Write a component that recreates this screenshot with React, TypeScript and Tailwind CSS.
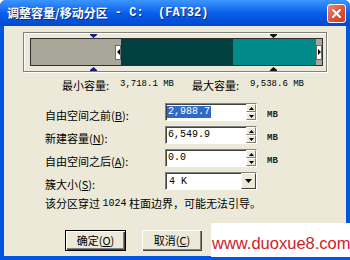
import React from 'react';

const cjk = "font-['Noto_Sans_CJK_SC',sans-serif]";
const mono = "font-['Liberation_Mono',monospace]";

const Marker = ({ up, color }: { up?: boolean; color: string }) => (
    <svg width="7" height="4" viewBox="0 0 7 4">
        {up ? (
            <path d="M3.5 0 L7 3 L0 3 Z M0 3 H7 V4 H0 Z" fill={color} />
        ) : (
            <path d="M0 0 H7 V1 H0 Z M0 1 L7 1 L3.5 4 Z" fill={color} />
        )}
    </svg>
);

const Handle = ({ right }: { right?: boolean }) => (
    <div className="w-[6px] h-full flex items-center justify-center bg-[#a9a799]">
        <div className="w-[6px] h-[15px] bg-white border border-[#6b6b6b] flex items-center justify-center">
            <svg width="3" height="6" viewBox="0 0 3 6">
                <path d={right ? 'M0 0 L3 3 L0 6 Z' : 'M3 0 L0 3 L3 6 Z'} fill="#000" />
            </svg>
        </div>
    </div>
);

const Arrow = ({ dir }: { dir: 'up' | 'down' }) => (
    <svg width="5" height="3" viewBox="0 0 5 3">
        <path d={dir === 'up' ? 'M2.5 0 L5 3 L0 3 Z' : 'M0 0 L5 0 L2.5 3 Z'} fill="#000" />
    </svg>
);

const Spinner = () => (
    <div className="w-[10px] h-full flex flex-col">
        <div className="flex-1 bg-[#ece9d8] border-t border-l border-white border-r border-b border-r-[#808080] border-b-[#808080] flex items-center justify-center">
            <Arrow dir="up" />
        </div>
        <div className="flex-1 bg-[#ece9d8] border-t border-l border-white border-r border-b border-r-[#808080] border-b-[#808080] flex items-center justify-center">
            <Arrow dir="down" />
        </div>
    </div>
);

const Field = ({ value, selected }: { value: string; selected?: boolean }) => (
    <div className="flex h-[18px] w-[92px] border-t border-l border-[#808080] border-r border-b border-r-white border-b-white">
        <div className="flex-1 bg-white flex items-center pl-[1px] shadow-[inset_1px_1px_0_#404040]">
            <span className={`${mono} text-[10px] leading-[12px] px-[1px] ${selected ? 'bg-[#316ac5] text-white' : 'text-black'}`}>
                {value}
            </span>
        </div>
        <Spinner />
    </div>
);

const Label = ({ text, k }: { text: string; k: string }) => (
    <div className={`w-[120px] ${cjk} text-[11px] leading-[18px] pt-[3px] text-black`}>
        {text}(<span className="underline">{k}</span>):
    </div>
);

const MB = () => (
    <div className={`ml-[10px] ${mono} font-bold text-[9px] leading-[18px] pt-[3px] text-[#222]`}>MB</div>
);

export default function App() {
    return (
        <div className="w-[350px] h-[260px] bg-[#0054e3] flex flex-col relative overflow-hidden rounded-t-[6px]">
            {/* Title bar */}
            <div className="h-[26px] flex items-center justify-between pl-[7px] pr-[4px] bg-gradient-to-b from-[#3d95ff] via-[#0a5fea] to-[#0048d0]">
                <div className="text-white font-bold text-[12px] leading-none whitespace-pre flex items-center [text-shadow:1px_1px_0_#0a2a7a]">
                    <span className={cjk}>调整容量/移动分区</span>
                    <span className={mono}> - C:  (FAT32)</span>
                </div>
                <div className="w-[19px] h-[19px] rounded-[3px] border border-white bg-gradient-to-br from-[#e9886a] via-[#e0553b] to-[#c63d22] flex items-center justify-center">
                    <svg width="9" height="9" viewBox="0 0 9 9">
                        <path d="M1 1 L8 8 M8 1 L1 8" stroke="#fff" strokeWidth="2" strokeLinecap="square" />
                    </svg>
                </div>
            </div>

            {/* Body */}
            <div className="flex-1 mx-[4px] mb-[4px] bg-[#ece9d8] pt-[6px] flex flex-col">
                {/* Partition bar */}
                <div className="ml-[19px] w-[304px] h-[40px] relative border border-[#808080] shadow-[inset_1px_1px_0_#fff,1px_1px_0_#fff] pl-[6px] pt-[5px]">
                    <div className="flex h-[28px] w-[293px] border border-[#2f2f2f]">
                        <div className="w-[84px] bg-[#a9a799]" />
                        <Handle />
                        <div className="w-[112px] bg-[#00403f]" />
                        <div className="flex-1 bg-[#008a89]" />
                        <Handle right />
                    </div>
                    <div className="absolute left-[66px] top-[1px]"><Marker color="#1c1c78" /></div>
                    <div className="absolute left-[66px] top-[34px]"><Marker up color="#1c1c78" /></div>
                    <div className="absolute left-[246px] top-[1px]"><Marker color="#111" /></div>
                    <div className="absolute left-[246px] top-[34px]"><Marker up color="#111" /></div>
                </div>

                {/* Min / max */}
                <div className="mt-[6px] pl-[58px] flex h-[14px] items-center text-black">
                    <span className={`w-[58px] ${cjk} text-[11px]`}>最小容量:</span>
                    <span className={`w-[72px] ${mono} text-[9px]`}>3,718.1 MB</span>
                    <span className={`w-[58px] ${cjk} text-[11px]`}>最大容量:</span>
                    <span className={`${mono} text-[9px]`}>9,538.6 MB</span>
                </div>

                {/* Form */}
                <div className="mt-[11px] pl-[41px] flex flex-col gap-[5px]">
                    <div className="flex items-start h-[18px]">
                        <Label text="自由空间之前" k="B" />
                        <Field value="2,988.7" selected />
                        <MB />
                    </div>
                    <div className="flex items-start h-[18px]">
                        <Label text="新建容量" k="N" />
                        <Field value="6,549.9" />
                        <MB />
                    </div>
                    <div className="flex items-start h-[18px]">
                        <Label text="自由空间之后" k="A" />
                        <Field value="0.0" />
                        <MB />
                    </div>
                    <div className="flex items-start h-[18px]">
                        <Label text="簇大小" k="S" />
                        <div className="flex h-[18px] w-[92px] border-t border-l border-[#808080] border-r border-b border-r-white border-b-white">
                            <div className="flex-1 bg-white flex items-center pl-[3px] shadow-[inset_1px_1px_0_#404040]">
                                <span className={`${mono} text-[10px] text-black`}>4 K</span>
                            </div>
                            <div className="w-[15px] h-full bg-[#ece9d8] border-t border-l border-white border-r border-b border-r-[#404040] border-b-[#404040] flex items-center justify-center">
                                <svg width="7" height="4" viewBox="0 0 7 4">
                                    <path d="M0 0 L7 0 L3.5 4 Z" fill="#000" />
                                </svg>
                            </div>
                        </div>
                    </div>
                </div>

                {/* Warning */}
                <div className={`mt-[6px] pl-[41px] h-[14px] flex items-center ${cjk} text-[11px] text-black whitespace-pre`}>
                    该分区穿过 <span className={`${mono} text-[10px]`}>1024</span> 柱面边界，可能无法引导。
                </div>

                {/* Buttons */}
                <div className="mt-[20px] pl-[61px] flex gap-[16px]">
                    <button className={`w-[61px] h-[21px] border border-black bg-[#ece9d8] shadow-[inset_1px_1px_0_#fff,inset_-1px_-1px_0_#404040,inset_-2px_-2px_0_#808080] ${cjk} text-[11px] text-black flex items-center justify-center`}>
                        确定(<span className="underline">O</span>)
                    </button>
                    <button className={`w-[60px] h-[21px] bg-[#ece9d8] shadow-[inset_1px_1px_0_#fff,inset_-1px_-1px_0_#404040,inset_-2px_-2px_0_#808080] ${cjk} text-[11px] text-black flex items-center justify-center`}>
                        取消(<span className="underline">C</span>)
                    </button>
                </div>
            </div>

            {/* Watermark */}
            <div className="absolute left-[211px] top-[223px] w-[139px] h-[34px] bg-white flex items-end pl-[1px] pb-[6px]">
                <span className="font-['Liberation_Sans',sans-serif] text-[16.5px] leading-none text-[#d0202a]">www.duoxue8.com</span>
            </div>
        </div>
    );
}
